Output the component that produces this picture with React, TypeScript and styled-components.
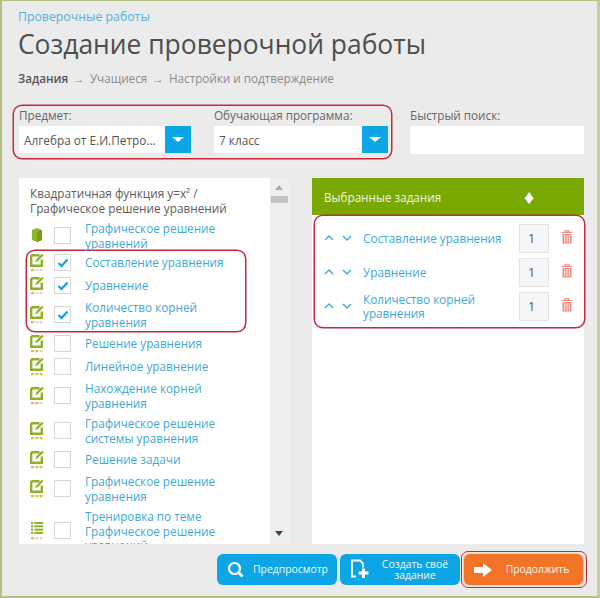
import React from "react";
import styled, { createGlobalStyle } from "styled-components";

const GlobalStyle = createGlobalStyle`
  html, body {
    margin: 0;
    padding: 0;
    background: #ebebeb;
  }
  * {
    box-sizing: border-box;
  }
`;

const Page = styled.div`
  width: 600px;
  height: 598px;
  overflow: hidden;
  background: #ebebeb;
  border-top: 1px solid #b4bf80;
  border-left: 2px solid #b4bf80;
  border-right: 3px solid #c5cea0;
  border-bottom: 2px solid #b4bf80;
  padding: 0 13px 0 17px;
  font-family: "Open Sans", "Liberation Sans", sans-serif;
  color: #555;
`;

const Crumb = styled.a`
  display: block;
  margin: 8px 0 0 -1px;
  font-size: 12.3px;
  line-height: 15px;
  color: #52b2dc;
`;

const Title = styled.h1`
  margin: 2px 0 0 -1px;
  font-size: 26.4px;
  line-height: 36px;
  font-weight: 400;
  color: #4d4f4f;
`;

const Steps = styled.div`
  display: flex;
  margin: 8px 0 0 -1px;
  gap: 5px;
  font-size: 11.7px;
  line-height: 16px;
  color: #8b8d8d;
`;

const Step = styled.span<{ $active?: boolean }>`
  font-weight: ${(p) => (p.$active ? 600 : 400)};
  color: ${(p) => (p.$active ? "#555" : "#8b8d8d")};
`;

const Filters = styled.div`
  display: flex;
  align-items: flex-start;
  margin-top: 20px;
  height: 50px;
`;

const Marked = styled.div`
  display: flex;
  flex: none;
  gap: 23px;
  width: 377px;
  height: 52px;
  margin-left: -5px;
  padding-left: 5px;
  box-shadow: 0 0 0 1.5px #c8283c;
  border-radius: 8px;
`;

const Field = styled.div<{ $w: number }>`
  width: ${(p) => p.$w}px;
`;

const SearchField = styled(Field)`
  margin-left: 19px;
`;

const Label = styled.div`
  font-size: 11.7px;
  line-height: 18px;
  height: 20px;
  color: #666;
`;

const Select = styled.div`
  display: flex;
  align-items: center;
  height: 27px;
  background: #fff;
  padding-left: 5px;
  font-size: 11.8px;
  color: #555;
`;

const SelectText = styled.span`
  flex: 1;
`;

const SelectButton = styled.span`
  display: flex;
  align-items: center;
  justify-content: center;
  width: 26px;
  height: 27px;
  background: #0ca6e6;
`;

const Caret = styled.span`
  width: 0;
  height: 0;
  border-left: 6px solid transparent;
  border-right: 6px solid transparent;
  border-top: 5px solid #fff;
`;

const SearchInput = styled.div`
  height: 28px;
  background: #fff;
`;

const Columns = styled.div`
  display: flex;
  margin-top: 22px;
  height: 366px;
`;

const LeftPanel = styled.div`
  width: 252px;
  height: 366px;
  overflow: hidden;
  background: #fff;
  padding: 8px 0 0 11px;
`;

const TreeTitle = styled.div`
  margin-bottom: 2px;
`;

const TreeLine = styled.div`
  height: 15px;
  font-size: 11.8px;
  line-height: 15px;
  color: #5c5c5c;
`;

const Scrollbar = styled.div`
  position: relative;
  width: 18px;
  margin-left: 1px;
  background: #efefef;
`;

const ScrollArrow = styled.span<{ $down?: boolean }>`
  display: block;
  width: 0;
  position: absolute;
  left: 4px;
  ${(p) => (p.$down ? "bottom: 8px;" : "top: 7px;")}
  border-left: 4px solid transparent;
  border-right: 4px solid transparent;
  ${(p) => (p.$down ? "border-top: 5px solid #444;" : "border-bottom: 5px solid #aaa;")}
`;

const ScrollThumb = styled.div`
  position: absolute;
  top: 18px;
  left: 0;
  width: 17px;
  height: 7px;
  background: #c4c4c4;
`;

const TaskRow = styled.div`
  display: grid;
  grid-template-columns: 24px 31px 1fr;
  align-items: center;
  min-height: 23px;
  padding: 3px 0;
  width: 205px;
`;

const IconCell = styled.span`
  display: flex;
  align-items: center;
  height: 17px;
`;

const CheckedGroup = styled.div`
  width: 218px;
  height: 80px;
  margin: -2px 0 1px -3px;
  padding-left: 3px;
  box-shadow: 0 0 0 1.5px #c8283c;
  border-radius: 8px;
`;

const TaskLink = styled.a`
  font-size: 11.75px;
  line-height: 14.5px;
  color: #3fa9d6;
`;

const Box = styled.span`
  display: flex;
  align-items: center;
  justify-content: center;
  width: 17px;
  height: 17px;
  border: 1px solid #d6d6d6;
  background: #fff;
`;

const Gutter = styled.div`
  width: 23px;
`;

const RightPanel = styled.div`
  width: 272px;
  height: 366px;
  background: #fff;
`;

const RightHeader = styled.div`
  display: grid;
  grid-template-columns: 1fr 14px;
  align-items: center;
  height: 37px;
  padding: 0 46px 0 12px;
  background: #79a800;
  color: #f1f6e0;
  font-size: 11.7px;
`;

const Diamond = styled.span`
  font-size: 20px;
  line-height: 20px;
  color: #fff;
`;

const SelectedList = styled.div`
  margin-left: 3px;
  width: 269px;
  height: 111px;
  margin-top: 1px;
  padding-top: 5px;
  box-shadow: 0 0 0 1.5px #c8283c;
  border-radius: 8px;
`;

const SelectedRow = styled.div`
  display: grid;
  grid-template-columns: 18px 21px 156px 30px 1fr;
  align-items: center;
  height: 34px;
  padding-left: 9px;
`;

const Qty = styled.div`
  display: flex;
  align-items: center;
  padding-left: 8px;
  width: 30px;
  height: 29px;
  background: #f6f6f8;
  border: 1px solid #e4e4e4;
  font-size: 12.5px;
  color: #555;
`;

const TrashWrap = styled.span`
  display: flex;
  justify-content: center;
  margin-top: -2px;
`;

const Footer = styled.div`
  display: flex;
  justify-content: flex-end;
  align-items: center;
  gap: 3px;
  margin-top: 7px;
`;

const ActionButton = styled.button<{ $orange?: boolean }>`
  display: flex;
  align-items: center;
  flex: none;
  width: 120px;
  height: 31px;
  padding: 0 0 0 10px;
  border: 0;
  border-radius: 6px;
  background: ${(p) => (p.$orange ? "#f37427" : "#0ca6e6")};
  color: #f2f9fd;
  font-family: inherit;
  font-size: 10.4px;
  line-height: 11px;
`;

const ButtonLabel = styled.span`
  flex: 1;
  text-align: center;
`;

const OrangeFrame = styled.div`
  flex: none;
  padding: 2px 3px 2px 2px;
  margin-left: -2px;
  margin-right: -3px;
  border: 1.5px solid #c8283c;
  border-radius: 7px;
  & > button {
    width: 119px;
    box-shadow: 0 0 0 1px #f9c7a5;
  }
`;

const Dots = ({ level }: { level: number }) => (
  <>
    {[0, 1, 2].map((i) => (
      <rect key={i} x={1 + i * 4.3} y="16" width="3" height="2.2" fill={i < level ? "#e8b93c" : "#d8d8d8"} />
    ))}
  </>
);

const EditIcon = ({ level }: { level: number }) => (
  <svg width="14" height="19" viewBox="0 0 14 19">
    <path d="M1.200 2.200h8.300M1.200 2.200v10.600h10.600V6.500" fill="none" stroke="#8cb228" strokeWidth="2.400" />
    <path d="M12 0.800l1.600 1.500-6 6-2.400.800.800-2.400z" fill="#8cb228" />
    <Dots level={level} />
  </svg>
);

const BookIcon = () => (
  <svg width="14" height="19" viewBox="0 0 14 19">
    <path d="M2 4l5-2 5 2v10l-5 2-5-2z" fill="#8fb52f" />
    <path d="M7 6l5-2v10l-5 2z" fill="#769c1c" />
  </svg>
);

const ListIcon = ({ level }: { level: number }) => (
  <svg width="14" height="19" viewBox="0 0 14 19">
    {[1, 4.3, 7.6, 10.9].map((y) => (
      <g key={y} fill="#8cb228">
        <rect x="1" y={y} width="2.2" height="2" />
        <rect x="4.4" y={y} width="8.8" height="2" />
      </g>
    ))}
    <Dots level={level} />
  </svg>
);

const Tick = () => (
  <svg width="12" height="10" viewBox="0 0 12 10">
    <path d="M1.500 5l3 3 6-6.500" fill="none" stroke="#1aa3e0" strokeWidth="2.400" />
  </svg>
);

const Chevron = ({ up }: { up?: boolean }) => (
  <svg width="10" height="6" viewBox="0 0 10 6">
    <path d={up ? "M1 5l4-4 4 4" : "M1 1l4 4 4-4"} fill="none" stroke="#3fa9d6" strokeWidth="1.400" />
  </svg>
);

const TrashIcon = () => (
  <svg width="12" height="14" viewBox="0 0 12 14">
    <path d="M0.500 2.500h11M4 2.300V.8h4v1.500" fill="none" stroke="#ee8a80" strokeWidth="1.200" />
    <path d="M1.500 4h9v9.500h-9z" fill="#ee8a80" />
    <path d="M3.700 5v7.500M6 5v7.500M8.300 5v7.500" stroke="#fff" strokeWidth="0.900" />
  </svg>
);

const SearchGlyph = () => (
  <svg width="17" height="17" viewBox="0 0 17 17">
    <circle cx="7.500" cy="7.500" r="5.500" fill="none" stroke="#fff" strokeWidth="2.200" />
    <path d="M11.500 11.500l4 4" stroke="#fff" strokeWidth="2.600" />
  </svg>
);

const NewFileGlyph = () => (
  <svg width="20" height="21" viewBox="0 0 20 21">
    <path d="M6 17.500H2V1.500h8l3 3v4" fill="none" stroke="#fff" strokeWidth="1.800" />
    <path d="M12 9.500h3v3h3.500v3H15v3.500h-3v-3.500H8.500v-3H12z" fill="#fff" />
  </svg>
);

const ArrowGlyph = () => (
  <svg width="18" height="14" viewBox="0 0 18 14">
    <path d="M0 4h9V0l9 7-9 7v-4H0z" fill="#fff" />
  </svg>
);

type Task = { title: string; icon: "book" | "edit" | "list"; level: number; checked?: boolean };

const before: Task[] = [{ title: "Графическое решение уравнений", icon: "book", level: 0 }];

const checkedTasks: Task[] = [
  { title: "Составление уравнения", icon: "edit", level: 1, checked: true },
  { title: "Уравнение", icon: "edit", level: 1, checked: true },
  { title: "Количество корней уравнения", icon: "edit", level: 1, checked: true },
];

const after: Task[] = [
  { title: "Решение уравнения", icon: "edit", level: 2 },
  { title: "Линейное уравнение", icon: "edit", level: 3 },
  { title: "Нахождение корней уравнения", icon: "edit", level: 2 },
  { title: "Графическое решение системы уравнения", icon: "edit", level: 3 },
  { title: "Решение задачи", icon: "edit", level: 3 },
  { title: "Графическое решение уравнения", icon: "edit", level: 3 },
  { title: "Тренировка по теме Графическое решение уравнений", icon: "list", level: 1 },
];

const selected = ["Составление уравнения", "Уравнение", "Количество корней уравнения"];

const TaskItem = ({ task }: { task: Task }) => (
  <TaskRow>
    <IconCell>
      {task.icon === "book" && <BookIcon />}
      {task.icon === "edit" && <EditIcon level={task.level} />}
      {task.icon === "list" && <ListIcon level={task.level} />}
    </IconCell>
    <Box>{task.checked && <Tick />}</Box>
    <TaskLink>{task.title}</TaskLink>
  </TaskRow>
);

export default function App() {
  return (
    <Page>
      <GlobalStyle />
      <Crumb>Проверочные работы</Crumb>
      <Title>Создание проверочной работы</Title>
      <Steps>
        <Step $active>Задания</Step>
        <span>→</span>
        <Step>Учащиеся</Step>
        <span>→</span>
        <Step>Настройки и подтверждение</Step>
      </Steps>
      <Filters>
        <Marked>
          <Field $w={172}>
            <Label>Предмет:</Label>
            <Select>
              <SelectText>Алгебра от Е.И.Петро...</SelectText>
              <SelectButton>
                <Caret />
              </SelectButton>
            </Select>
          </Field>
          <Field $w={174}>
            <Label>Обучающая программа:</Label>
            <Select>
              <SelectText>7 класс</SelectText>
              <SelectButton>
                <Caret />
              </SelectButton>
            </Select>
          </Field>
        </Marked>
        <SearchField $w={174}>
          <Label>Быстрый поиск:</Label>
          <SearchInput />
        </SearchField>
      </Filters>
      <Columns>
        <LeftPanel>
          <TreeTitle>
            <TreeLine>Квадратичная функция y=x² /</TreeLine>
            <TreeLine>Графическое решение уравнений</TreeLine>
          </TreeTitle>
          {before.map((t) => (
            <TaskItem key={t.title} task={t} />
          ))}
          <CheckedGroup>
            {checkedTasks.map((t) => (
              <TaskItem key={t.title} task={t} />
            ))}
          </CheckedGroup>
          {after.map((t) => (
            <TaskItem key={t.title} task={t} />
          ))}
        </LeftPanel>
        <Scrollbar>
          <ScrollArrow />
          <ScrollThumb />
          <ScrollArrow $down />
        </Scrollbar>
        <Gutter />
        <RightPanel>
          <RightHeader>
            <span>Выбранные задания</span>
            <Diamond>♦</Diamond>
          </RightHeader>
          <SelectedList>
            {selected.map((title) => (
              <SelectedRow key={title}>
                <Chevron up />
                <Chevron />
                <TaskLink>{title}</TaskLink>
                <Qty>1</Qty>
                <TrashWrap>
                  <TrashIcon />
                </TrashWrap>
              </SelectedRow>
            ))}
          </SelectedList>
        </RightPanel>
      </Columns>
      <Footer>
        <ActionButton>
          <SearchGlyph />
          <ButtonLabel>Предпросмотр</ButtonLabel>
        </ActionButton>
        <ActionButton>
          <NewFileGlyph />
          <ButtonLabel>
            Создать своё
            <br />
            задание
          </ButtonLabel>
        </ActionButton>
        <OrangeFrame>
          <ActionButton $orange>
            <ArrowGlyph />
            <ButtonLabel>Продолжить</ButtonLabel>
          </ActionButton>
        </OrangeFrame>
      </Footer>
    </Page>
  );
}
